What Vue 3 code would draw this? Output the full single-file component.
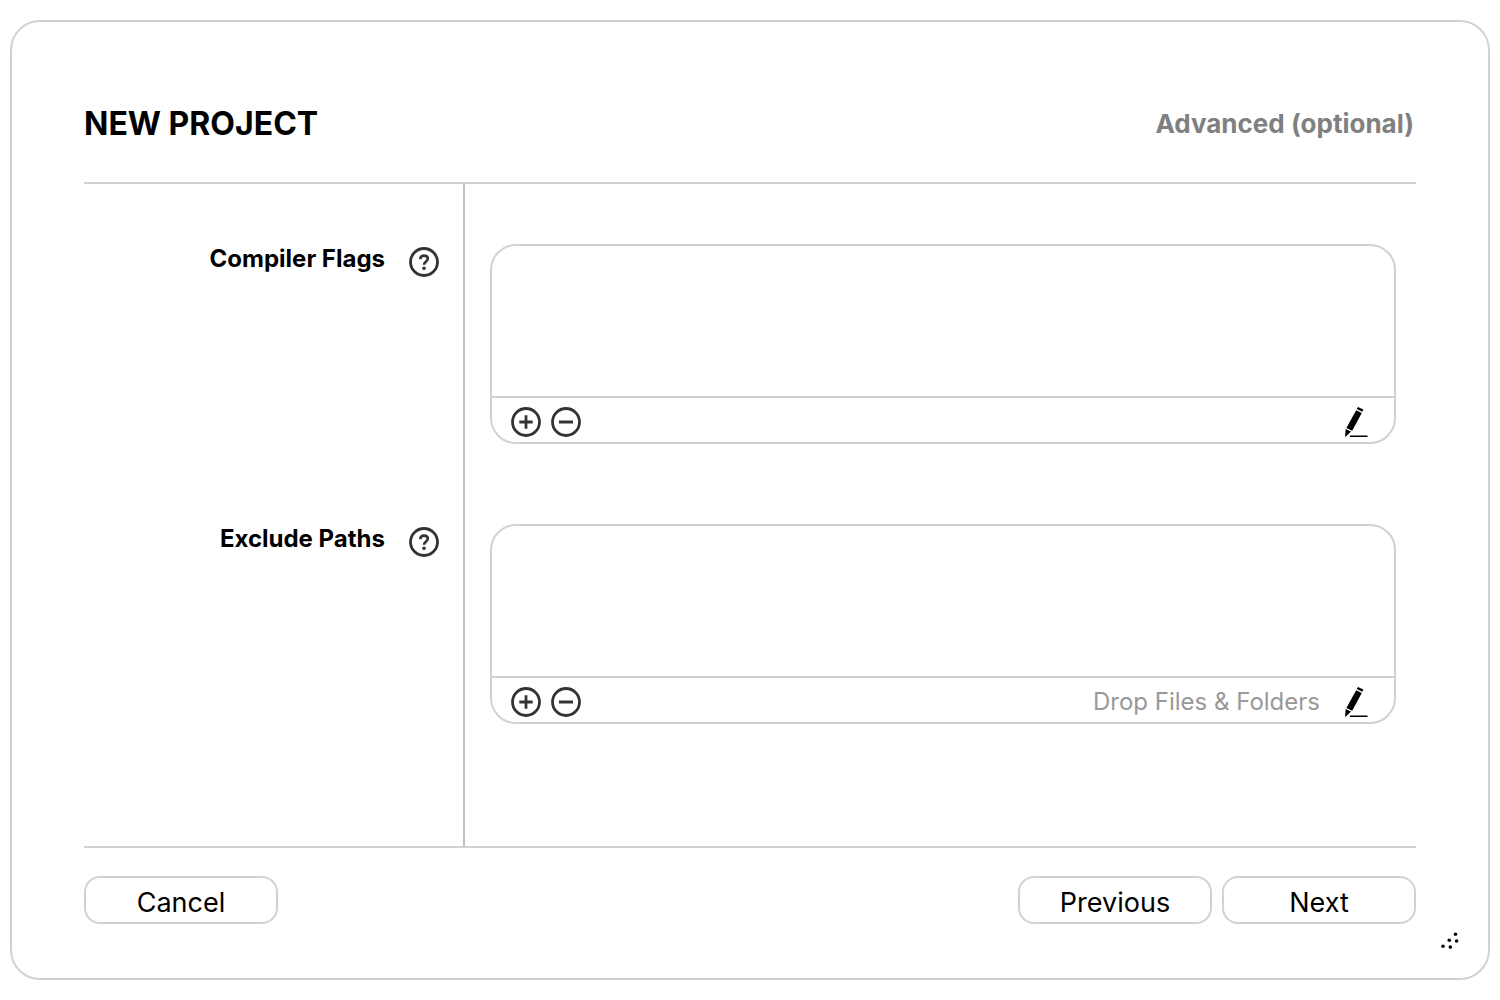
<script setup>
import { reactive } from 'vue'

const fields = reactive([
  { id: 'compiler-flags', label: 'Compiler Flags', value: '', hint: '' },
  { id: 'exclude-paths', label: 'Exclude Paths', value: '', hint: 'Drop Files & Folders' },
])
</script>

<template>
  <main class="dialog">
    <header class="header">
      <h1 class="title">NEW PROJECT</h1>
      <p class="step">Advanced (optional)</p>
    </header>

    <form class="fields" @submit.prevent>
      <div v-for="field in fields" :key="field.id" class="row">
        <div class="label-cell">
          <label class="label" :for="field.id">{{ field.label }}</label>
          <button type="button" class="icon-button help" :aria-label="'Help: ' + field.label">
            <svg width="30" height="30" viewBox="0 0 30 30" fill="none" stroke="#333" stroke-width="2.8">
              <circle cx="15" cy="15" r="13.5" />
              <path d="M11.2 12.2C11.4 9.7 12.9 8.6 15 8.6C17.3 8.6 18.8 9.9 18.8 11.8C18.8 14.4 15.1 14.6 15.1 17.8" stroke-width="2.6" />
              <circle cx="15" cy="21.2" r="1.8" fill="#333" stroke="none" />
            </svg>
          </button>
        </div>
        <div class="field-cell">
          <div class="list-box">
            <textarea :id="field.id" v-model="field.value" class="entries"></textarea>
            <div class="toolbar">
              <button type="button" class="icon-button" aria-label="Add">
                <svg width="30" height="30" viewBox="0 0 30 30" fill="none" stroke="#333" stroke-width="2.8">
                  <circle cx="15" cy="15" r="13.5" />
                  <path d="M8.3 15H21.7M15 8.3V21.7" />
                </svg>
              </button>
              <button type="button" class="icon-button" aria-label="Remove">
                <svg width="30" height="30" viewBox="0 0 30 30" fill="none" stroke="#333" stroke-width="2.8">
                  <circle cx="15" cy="15" r="13.5" />
                  <path d="M8 15H22" />
                </svg>
              </button>
              <span class="hint">{{ field.hint }}</span>
              <button type="button" class="icon-button" aria-label="Edit as text">
                <svg width="24" height="32" viewBox="0 0 24 32" fill="#000">
                  <path d="M14 1L19.3 3.6L18.2 5.8L12.8 3.1Z" />
                  <path d="M12.2 4.2L17.8 7L8.2 24.8L2.4 21.9Z" />
                  <path d="M1.7 22.9L7 25.6L1 31.2Z" />
                  <path d="M6 29.4H23.5V31H6Z" />
                </svg>
              </button>
            </div>
          </div>
        </div>
      </div>
    </form>

    <footer class="footer">
      <button type="button" class="button">Cancel</button>
      <div class="actions">
        <button type="button" class="button">Previous</button>
        <button type="button" class="button">Next</button>
      </div>
    </footer>

    <svg class="grip" width="18" height="18" viewBox="0 0 18 18" fill="#000" aria-hidden="true">
      <circle cx="14.5" cy="2.3" r="1.8" />
      <circle cx="8.3" cy="8.2" r="1.8" />
      <circle cx="15.6" cy="9" r="1.8" />
      <circle cx="2" cy="14.2" r="1.8" />
      <circle cx="9.3" cy="15.1" r="1.8" />
    </svg>
  </main>
</template>

<style>
body {
  background: #fff;
}
</style>

<style scoped>
.dialog {
  position: relative;
  display: flex;
  flex-direction: column;
  box-sizing: border-box;
  min-height: calc(100vh - 40px);
  margin: 20px 10px;
  padding: 0 72px 54px;
  border: 2px solid #d2d2d2;
  border-radius: 30px;
  color: #000;
  font-family: Inter, sans-serif;
}

.header {
  display: flex;
  align-items: center;
  justify-content: space-between;
  padding: 80px 2px 36px 0;
  border-bottom: 2px solid #d2d2d2;
}

.title {
  margin: 0;
  font-size: 32px;
  line-height: 44px;
  font-weight: 700;
}

.step {
  margin: 0;
  color: #808080;
  font-size: 26px;
  line-height: 44px;
  font-weight: 700;
}

.fields {
  display: flex;
  flex: 1;
  flex-direction: column;
}

.row {
  display: grid;
  grid-template-columns: 381px 1fr;
}

.row:last-child {
  flex: 1;
}

.label-cell {
  display: flex;
  align-items: flex-start;
  justify-content: flex-end;
  gap: 24px;
  padding: 60px 24px 0 0;
  border-right: 2px solid #bfbfbf;
}

.label {
  font-size: 24px;
  line-height: 30px;
  font-weight: 700;
}

.icon-button {
  display: block;
  padding: 0;
  border: 0;
  background: none;
  cursor: pointer;
}

.icon-button svg {
  display: block;
}

.help {
  margin-top: 3px;
}

.field-cell {
  padding: 60px 20px 20px 25px;
}

.list-box {
  overflow: hidden;
  border: 2px solid #d2d2d2;
  border-radius: 26px;
}

.entries {
  display: block;
  box-sizing: border-box;
  width: 100%;
  height: 150px;
  padding: 16px 20px;
  border: 0;
  outline: 0;
  resize: none;
  background: transparent;
  font: inherit;
  font-size: 24px;
}

.toolbar {
  display: flex;
  align-items: center;
  gap: 10px;
  box-sizing: border-box;
  height: 46px;
  padding: 4px 26px 0 19px;
  border-top: 2px solid #d2d2d2;
}

.hint {
  flex: 1;
  margin-right: 14px;
  color: #999;
  font-size: 24px;
  line-height: 30px;
  text-align: right;
}

.footer {
  display: flex;
  justify-content: space-between;
  padding-top: 28px;
  border-top: 2px solid #d2d2d2;
}

.actions {
  display: flex;
  gap: 10px;
}

.button {
  width: 194px;
  height: 48px;
  padding: 6px 0 0;
  border: 2px solid #d2d2d2;
  border-radius: 16px;
  background: #fff;
  color: #000;
  font-family: inherit;
  font-size: 27px;
  line-height: 36px;
  cursor: pointer;
}

.grip {
  position: absolute;
  right: 29px;
  bottom: 28px;
}
</style>
